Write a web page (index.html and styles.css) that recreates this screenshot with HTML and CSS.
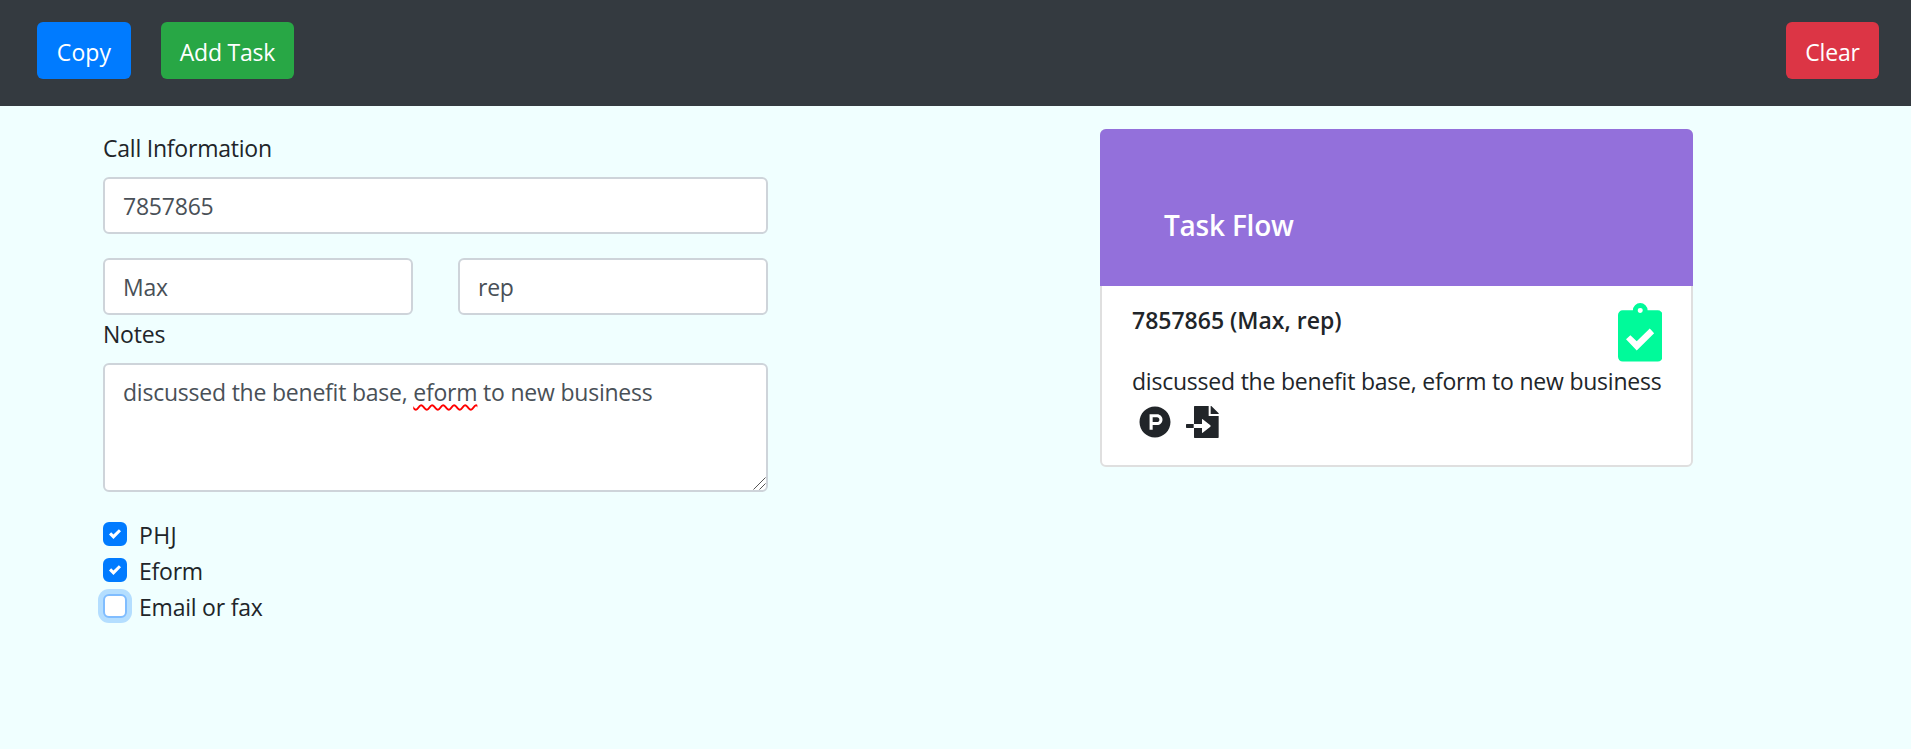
FILE: index.html
```html
<!DOCTYPE html>
<html lang="en">
<head>
<meta charset="utf-8">
<title>Task Flow</title>
<link rel="stylesheet" href="styles.css">
</head>
<body>
<nav class="navbar">
  <button class="btn btn-primary">Copy</button>
  <button class="btn btn-success">Add Task</button>
  <button class="btn btn-danger">Clear</button>
</nav>
<main class="page">
  <form class="call-form">
    <label class="label">Call Information</label>
    <div class="control">7857865</div>
    <div class="row">
      <div class="control">Max</div>
      <div class="control">rep</div>
    </div>
    <label class="label">Notes</label>
    <div class="control notes">discussed the benefit base, <span class="misspelled">eform</span> to new business
      <svg class="grip" viewBox="0 0 13 13"><path d="M.5 12.5l12-12M6.5 12.5l6-6"/></svg>
    </div>
    <div class="checks">
      <div class="check"><span class="box checked"><svg viewBox="0 0 8 8"><path d="M6.564.75l-3.59 3.612-1.538-1.55L0 4.26 2.974 7.25 8 2.193z"/></svg></span><span class="phj">PHJ</span></div>
      <div class="check"><span class="box checked"><svg viewBox="0 0 8 8"><path d="M6.564.75l-3.59 3.612-1.538-1.55L0 4.26 2.974 7.25 8 2.193z"/></svg></span><span>Eform</span></div>
      <div class="check"><span class="box focused"></span><span>Email or fax</span></div>
    </div>
  </form>
  <section class="card">
    <header class="card-header"><h1 class="card-title">Task Flow</h1></header>
    <div class="card-body">
      <div class="task-head">
        <h2 class="task-title">7857865 (Max, rep)</h2>
        <svg class="clipboard" viewBox="0 0 133 176" preserveAspectRatio="none">
          <path fill-rule="evenodd" d="M14 22H44.500A22 22 0 0 1 88.500 22H119A14 14 0 0 1 133 36V162A14 14 0 0 1 119 176H14A14 14 0 0 1 0 162V36A14 14 0 0 1 14 22ZM59 22.500A7.500 7.500 0 0 0 74 22.500A7.500 7.500 0 0 0 59 22.500ZM24 109L37 97 56 115 95 77 108 91 56 143Z"/>
        </svg>
      </div>
      <p class="task-text">discussed the benefit base, eform to new business</p>
      <div class="task-icons">
        <svg viewBox="0 0 512 512"><path d="M326.3 218.8c0 20.5-16.7 37.2-37.2 37.2h-70.3v-74.4h70.3c20.5 0 37.2 16.7 37.2 37.2zM504 256c0 137-111 248-248 248S8 393 8 256 119 8 256 8s248 111 248 248zm-128.1-37.2c0-47.9-38.9-86.8-86.8-86.8H169.2v248h49.6v-74.4h70.3c47.9 0 86.8-38.9 86.8-86.8z"/></svg>
        <svg class="import" viewBox="0 0 99 96"><path d="M2 54H23V66H2Q0 66 0 64V56Q0 54 2 54ZM26 0H68V30H98V94Q98 96 96 96H26Q24 96 24 94V66H48V78Q48 83 52 79L73 62Q75 60 73 58L52 41Q48 37 48 42V54H24V2Q24 0 26 0ZM74 0H76L98 22V24H74Z"/></svg>
      </div>
    </div>
  </section>
</main>
</body>
</html>
```
FILE: styles.css
```css
* { box-sizing: border-box; }
body {
  margin: 0;
  min-height: 749px;
  background: #f0ffff;
  color: #212529;
  font: 23px/36px "Open Sans", "Noto Sans", sans-serif;
  letter-spacing: -.22px;
  white-space: nowrap;
}
.navbar {
  display: flex;
  align-items: flex-start;
  height: 106px;
  padding: 22px 32px 0 37px;
  background: #343a40;
}
.btn {
  height: 57px;
  padding: 3px 0 0;
  border: 0;
  border-radius: 6px;
  color: #fff;
  font: inherit;
  letter-spacing: inherit;
  text-align: center;
}
.btn-primary { width: 94px; background: #007bff; letter-spacing: .1px; }
.btn-success { width: 133px; margin-left: 30px; background: #28a745; }
.btn-danger { width: 93px; margin-left: auto; background: #dc3545; }
.page {
  display: flex;
  align-items: flex-start;
  padding: 23px 0 0 103px;
}
.call-form { width: 665px; }
.label { display: block; height: 48px; padding-top: 1px; }
.control {
  height: 57px;
  padding: 9px 18px;
  border: 2px solid #ced4da;
  border-radius: 6px;
  background: #fff;
  color: #495057;
}
.row {
  display: grid;
  grid-template-columns: 1fr 1fr;
  gap: 45px;
  margin-top: 24px;
}
.notes { position: relative; height: 129px; }
.misspelled {
  text-decoration: underline wavy #f00 1.5px;
  text-decoration-skip-ink: none;
  text-underline-offset: 3px;
}
.grip {
  position: absolute;
  right: 0;
  bottom: 0;
  width: 13px;
  height: 13px;
  fill: none;
  stroke: #555;
}
.checks { margin-top: 25px; }
.check { display: flex; height: 36px; gap: 12px; }
.phj { letter-spacing: .3px; }
.box {
  display: flex;
  align-items: center;
  justify-content: center;
  width: 24px;
  height: 24px;
  margin-top: 5px;
  border: 2px solid #adb5bd;
  border-radius: 6px;
  background: #fff;
}
.box.checked { border-color: #007bff; background: #007bff; }
.box.focused { border-color: #80bdff; box-shadow: 0 0 0 5px rgba(0, 123, 255, .25); }
.box svg { width: 12px; height: 12px; fill: #fff; }
.card {
  width: 593px;
  height: 338px;
  margin-left: 332px;
  border: 2px solid #dfdfdf;
  border-radius: 6px;
  background: #fff;
}
.card-header {
  height: 157px;
  margin: -2px -2px 0;
  padding: 78px 64px 0;
  border-radius: 6px 6px 0 0;
  background: #9370db;
  color: #fff;
}
.card-title { margin: 0; font-size: 28px; font-weight: 600; }
.card-body { padding: 16px 29px 0 30px; }
.task-head { display: flex; justify-content: space-between; height: 61px; }
.task-title { margin: 0; font-size: 23px; font-weight: 600; letter-spacing: 0; }
.clipboard { width: 44.500px; height: 58.500px; margin-top: 1px; fill: #00fa9a; }
.task-text { margin: 0; }
.task-icons { display: flex; gap: 15px; margin: 7px 0 0 7px; }
.task-icons svg { width: 32px; height: 32px; fill: #212529; }
.task-icons .import { width: 33px; }
```
